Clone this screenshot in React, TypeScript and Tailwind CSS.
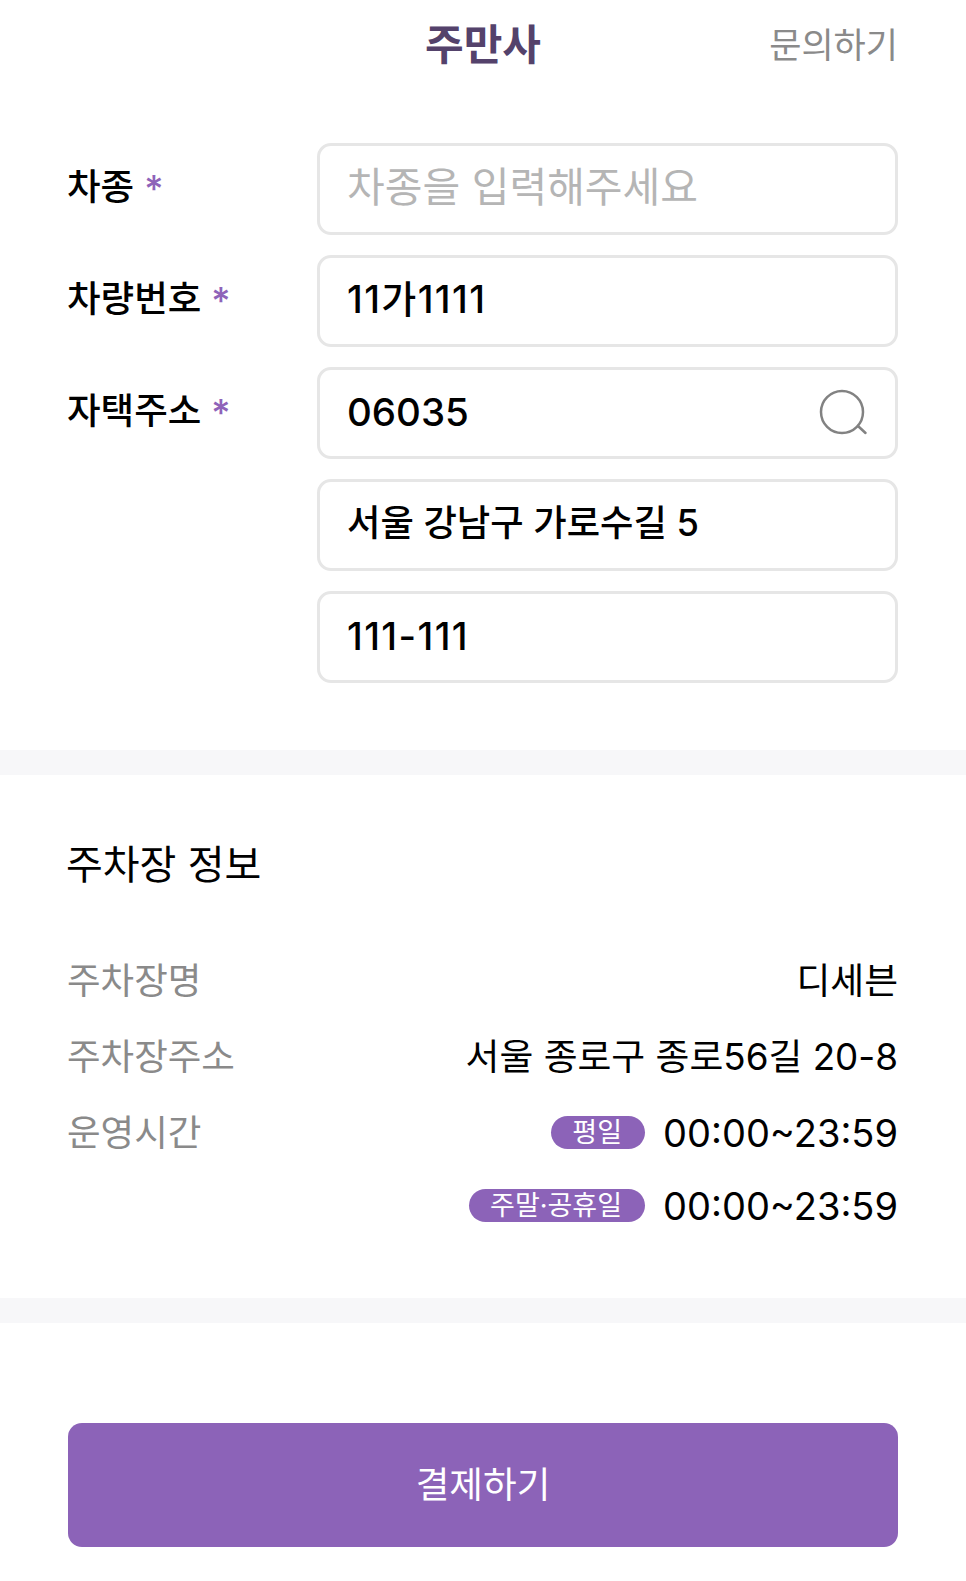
import { FC } from "react";

const FONT = "font-['Inter','Noto_Sans_CJK_KR',sans-serif]";

const Label: FC<{ text: string }> = ({ text }) => (
  <div className="-ml-[1px] flex h-[88px] w-[250px] shrink-0 items-center gap-[10px] text-[36.5px] leading-none font-medium text-black">
    <span>{text}</span>
    <span className="mt-[3px] text-[37px] text-[#8e63b9]">*</span>
  </div>
);

const Field: FC<{ value?: string; placeholder?: string; search?: boolean; inputClass: string }> = ({
  value,
  placeholder,
  search,
  inputClass,
}) => (
  <div className="flex h-[92px] w-full items-center rounded-[14px] border-[3px] border-[#e6e6e6] bg-white pr-[26px] pl-[27px]">
    <input
      readOnly
      value={value ?? ""}
      placeholder={placeholder}
      className={`w-full min-w-0 flex-1 bg-transparent leading-none text-black outline-none placeholder:font-normal placeholder:text-[#b5b5b5] ${inputClass}`}
    />
    {search && (
      <svg className="shrink-0" width="50" height="48" viewBox="0 0 50 48" fill="none" stroke="#828282" strokeWidth="2.5" strokeLinecap="round">
        <circle cx="23" cy="23" r="21" />
        <path d="M39 37 L46.5 44" />
      </svg>
    )}
  </div>
);

const InfoRow: FC<{ label: string; value: string }> = ({ label, value }) => (
  <div className="flex h-[76px] items-center justify-between text-[36.8px] leading-none">
    <span className="-ml-[1px] text-[36.5px] text-[#8a8a8a]">{label}</span>
    <span className="text-black">{value}</span>
  </div>
);

const Hours: FC<{ label: string; time: string }> = ({ label, time }) => (
  <div className="flex items-center gap-[18px]">
    <span className="mb-[2px] flex h-[33px] items-center rounded-full bg-[#8c63b8] pr-[23px] pl-[21px] text-[27px] leading-none text-white">{label}</span>
    <span className="text-[38px] leading-none text-black">{time}</span>
  </div>
);

export default function App() {
  return (
    <div className={`${FONT} flex min-h-[1581px] w-full flex-col bg-white`}>
      <header className="grid h-[90px] grid-cols-[1fr_auto_1fr] items-center px-[68px]">
        <span />
        <h1 className="text-[42px] leading-none font-bold text-[#54426b]">주만사</h1>
        <a className="justify-self-end text-[35px] leading-none text-[#8a8a8a]">문의하기</a>
      </header>

      <section className="flex flex-col gap-[20px] pt-[53px] pr-[68px] pb-[67px] pl-[68px]">
        <div className="flex">
          <Label text="차종" />
          <div className="min-w-0 flex-1">
            <Field placeholder="차종을 입력해주세요" inputClass="pb-[4px] text-[41px]" />
          </div>
        </div>
        <div className="flex">
          <Label text="차량번호" />
          <div className="min-w-0 flex-1">
            <Field value="11가1111" inputClass="pb-[10px] text-[38px] font-medium tracking-[1.4px]" />
          </div>
        </div>
        <div className="flex">
          <Label text="자택주소" />
          <div className="flex min-w-0 flex-1 flex-col gap-[20px]">
            <Field value="06035" search inputClass="pb-[2px] text-[38.5px] font-[450]" />
            <Field value="서울 강남구 가로수길 5" inputClass="pb-[10px] text-[36.3px] font-medium" />
            <Field value="111-111" inputClass="pb-[2px] text-[38px] font-[450] tracking-[1.4px]" />
          </div>
        </div>
      </section>

      <div className="h-[25px] bg-[#f7f7f9]" />

      <section className="px-[68px] pt-[63px]">
        <h2 className="-ml-[2px] text-[40px] leading-[54px] font-normal text-black">주차장 정보</h2>
        <div className="mt-[51px]">
          <InfoRow label="주차장명" value="디세븐" />
          <InfoRow label="주차장주소" value="서울 종로구 종로56길 20-8" />
          <div className="flex justify-between">
            <span className="-ml-[1px] mt-[20px] text-[36.5px] leading-none text-[#8a8a8a]">운영시간</span>
            <div className="flex flex-col items-end gap-[35px] pt-[19px]">
              <Hours label="평일" time="00:00~23:59" />
              <Hours label="주말·공휴일" time="00:00~23:59" />
            </div>
          </div>
        </div>
      </section>

      <div className="mt-[73px] h-[25px] bg-[#f7f7f9]" />

      <div className="px-[68px] pt-[100px]">
        <button className="h-[124px] w-full rounded-[14px] bg-[#8c63b8] text-[36.6px] leading-none text-white">결제하기</button>
      </div>
    </div>
  );
}
